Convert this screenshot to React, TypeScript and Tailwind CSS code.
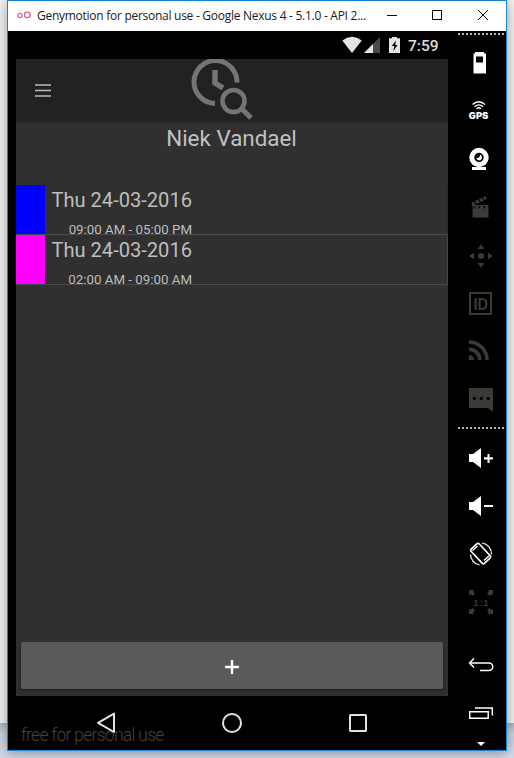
import React from 'react';

const sans = "font-['Open_Sans','Noto_Sans',sans-serif]";

function SideIcon({ y, children }: { y: number; children: React.ReactNode }) {
  return (
    <svg className="block h-12 w-12 shrink-0" viewBox={`457 ${y} 48 48`} fill="currentColor">
      {children}
    </svg>
  );
}

function Dots() {
  return (
    <div className="ml-px h-[2px] w-[46px] shrink-0 bg-[repeating-linear-gradient(90deg,#b9b9b9_0_2px,transparent_2px_4px)]" />
  );
}

function TitleBar() {
  return (
    <header className="flex h-[30px] shrink-0 items-center bg-white">
      <svg className="ml-[9px] h-[30px] w-[14px] shrink-0" viewBox="17 1 14 30" fill="none" stroke="#dc6297" strokeWidth="1.3">
        <circle cx="20" cy="15.5" r="2.1" />
        <circle cx="27.3" cy="14.9" r="2.8" />
      </svg>
      <span className={`${sans} ml-[6px] w-[334px] whitespace-nowrap text-[12px] leading-[30px] tracking-[-0.27px] text-[#202020]`}>
        Genymotion for personal use - Google Nexus 4 - 5.1.0 - API 2...
      </span>
      <svg className="h-[30px] w-[120px] shrink-0" viewBox="371 1 120 30" fill="none" stroke="#000">
        <path d="M387 15.5h10" />
        <rect x="432.5" y="10.5" width="9" height="9" />
        <path d="M478 10l10 10M488 10l-10 10" />
      </svg>
    </header>
  );
}

function StatusBar() {
  return (
    <div className="flex h-7 shrink-0 justify-end">
      <svg className="h-7 w-[60px]" viewBox="342 31 60 28">
        <path d="M342.3 40.5Q352 33.2 361.8 40.5L352 53z" fill="#e4e4e4" />
        <path d="M380 37v16h-16z" fill="#4b4b4b" />
        <path d="M373 44v9h-9z" fill="#e4e4e4" />
        <path d="M389 38.3h3V37h5v1.3h3V53h-11z" fill="#e4e4e4" />
        <path d="M396 40.5l-4.2 5.5h2.4l-.8 5 4.1-6h-2.3z" fill="#000" />
      </svg>
      <span className="mr-[9px] ml-[6px] w-[31px] whitespace-nowrap font-[Roboto,sans-serif] text-[15.5px] leading-[30px] font-medium text-[#dedede]">
        7:59
      </span>
    </div>
  );
}

function AppHeader() {
  return (
    <div className="h-[65px] shrink-0 bg-[linear-gradient(#222_0_61px,#2c2c2c_64px,#303030)]">
      <svg className="h-[65px] w-full" viewBox="16 59 432 65" fill="none">
        <path d="M35 85h16M35 90.5h16M35 96h16" stroke="#bababa" strokeWidth="1.5" />
        <g stroke="#757575">
          <path d="M237 82.5A21.5 21.5 0 1 0 215 103.5" strokeWidth="5" />
          <path d="M215 70v13l8 5" strokeWidth="5.5" />
          <circle cx="233.5" cy="101" r="11" strokeWidth="4.6" />
          <path d="M241.5 108.5l9.5 9.5" strokeWidth="5.2" />
        </g>
      </svg>
    </div>
  );
}

function Shift({ date, hours, colour, edge }: { date: string; hours: string; colour: string; edge: string }) {
  return (
    <li className={`flex h-[50px] border-b border-[#4b4b4b] ${edge}`}>
      <div className={`w-[28.5px] shrink-0 ${colour}`} />
      <div className="ml-[6.5px] flex w-[141px] flex-col items-end whitespace-nowrap text-[#bebebe]">
        <span className="text-[20.1px] leading-[31px]">{date}</span>
        <span className="mt-[6px] text-[13.3px] leading-[16px]">{hours}</span>
      </div>
    </li>
  );
}

function Phone() {
  return (
    <section className="ml-2 flex w-[432px] shrink-0 flex-col font-[Roboto,sans-serif]">
      <StatusBar />
      <main className="flex h-[637px] shrink-0 flex-col bg-[#303030]">
        <AppHeader />
        <h1 className="h-[61px] pr-px text-center text-[22.4px] leading-[28px] font-normal text-[#c1c1c1]">Niek Vandael</h1>
        <ul>
          <Shift date="Thu 24-03-2016" hours="09:00 AM - 05:00 PM" colour="bg-[#0000ff]" edge="border-r border-r-[#26264a]" />
          <Shift date="Thu 24-03-2016" hours="02:00 AM - 09:00 AM" colour="bg-[#ff00ff]" edge="border-r border-r-[#663066]" />
        </ul>
        <button className="mx-[5px] mt-auto mb-[7px] flex h-[47px] items-center justify-center rounded-[2px] bg-[#5a5a5c] shadow-[0_1px_2px_rgba(0,0,0,0.5)]">
          <svg className="h-4 w-4" viewBox="0 0 16 16" fill="none" stroke="#fff" strokeWidth="2.4">
            <path d="M1 9h14M8 2v14" />
          </svg>
        </button>
      </main>
      <nav className="relative h-[54px] shrink-0">
        <span className="absolute top-[27px] left-[5px] text-[17.5px] leading-[24px] font-light tracking-[-0.72px] whitespace-nowrap text-[#444]">
          free for personal use
        </span>
        <svg className="absolute inset-0 h-[54px] w-[432px]" viewBox="16 696 432 54" fill="none" stroke="#e2e2e2" strokeWidth="2">
          <path d="M98 722.8l16-9.2v18.4z" strokeLinejoin="round" />
          <circle cx="232" cy="723" r="9" />
          <rect x="350" y="715" width="16" height="16" rx=".5" />
        </svg>
      </nav>
    </section>
  );
}

function Toolbar() {
  return (
    <aside className="flex w-[58px] shrink-0 flex-col pt-[2px] pl-[9px] text-white">
      <Dots />
      <div className="mt-1">
        <SideIcon y={39}>
          <path fillRule="evenodd" d="M473.5 53.500h1.500v-1.500h9v1.500h2v20h-12.500zM476 56.500v6h7v-6z" />
        </SideIcon>
        <SideIcon y={87}>
          <path d="M472.500 104.500q6.300-5.500 12.500 0M474.500 106.700q4.300-3.700 8.500 0M476.500 108.700q2.300-2 4.500 0" fill="none" stroke="currentColor" strokeWidth="1.300" />
          <text x="468.800" y="118.700" textLength="19.500" lengthAdjust="spacingAndGlyphs" className="font-[Inter,sans-serif] text-[9px] font-black">GPS</text>
        </SideIcon>
        <SideIcon y={135}>
          <path d="M472 170v-3h5.500v-2h3v2h5.500v3z" />
          <circle cx="479" cy="157.500" r="9.700" />
          <circle cx="479" cy="157.500" r="4.700" fill="#000" />
          <path d="M480 154.500a3 3 0 1 1-3.800 3.800q4.200 0 3.800-3.800z" />
        </SideIcon>
      </div>
      <div className="text-[#3b3b36]">
        <SideIcon y={183}>
          <path d="M472.500 205h16v12.500h-16z" />
          <path d="M472 204.500l14-7" stroke="currentColor" strokeWidth="3.500" />
          <path d="M474 201l2.500 3.500M478 199l2.500 3.500M482 197l2.500 3.500M475 206l-1.500 2.500M480 206l-1.500 2.500M485 206l-1.500 2.500" stroke="#000" strokeWidth="1.200" />
        </SideIcon>
        <SideIcon y={231}>
          <circle cx="481" cy="256" r="3" />
          <path d="M481 244l3.200 5h-6.400zM481 268l3.200-5h-6.400zM469 256l5-3.200v6.400zM493 256l-5-3.200v6.400z" />
        </SideIcon>
        <SideIcon y={279}>
          <rect x="470" y="293" width="21" height="21" fill="none" stroke="currentColor" strokeWidth="2" />
          <text x="473.500" y="309.500" textLength="14.500" lengthAdjust="spacingAndGlyphs" className="font-['Liberation_Sans',sans-serif] text-[16px] font-bold">ID</text>
        </SideIcon>
        <SideIcon y={327}>
          <path d="M469 355a5 5 0 0 1 5 5h-5z" />
          <path d="M469 349.200a10.800 10.800 0 0 1 10.800 10.800M469 342a18 18 0 0 1 18 18" fill="none" stroke="currentColor" strokeWidth="3.600" />
        </SideIcon>
        <SideIcon y={375}>
          <path d="M469 388h24v24l-5-4h-19z" />
          <g fill="#000">
            <circle cx="474.500" cy="398.500" r="1.700" />
            <circle cx="481.300" cy="398.500" r="1.700" />
            <circle cx="488.100" cy="398.500" r="1.700" />
          </g>
        </SideIcon>
      </div>
      <div className="mt-1">
        <Dots />
      </div>
      <div className="mt-[5px]">
        <SideIcon y={434}>
          <path d="M469 454h4l8-6v20l-8-6h-4zM484 457.300h3.500V454h2v3.300h3.500v2.200h-3.500v3.500h-2v-3.500H484z" />
        </SideIcon>
        <SideIcon y={482}>
          <path d="M469 502h4l8-6v20l-8-6h-4zM484 505h9v2h-9z" />
        </SideIcon>
        <SideIcon y={530}>
          <g fill="none" stroke="currentColor" strokeWidth="1.600">
            <rect x="475.200" y="543.800" width="11" height="19.500" rx="1.800" transform="rotate(-43 480.700 553.550)" />
            <path d="M484 560.500l6-5.500M472.500 550.500l5-4.500" strokeWidth="1.500" />
            <path d="M482 543a11 11 0 0 1 9.500 11.500M479.500 565a11 11 0 0 1-9-10.500" strokeWidth="1.200" />
          </g>
        </SideIcon>
        <div className="text-[#3b3b36]">
          <SideIcon y={578}>
            <path d="M469 590h5.500l-1.500 1.500 2 2-2.500 2.500-2-2-1.500 1.500zM493 590h-5.500l1.500 1.500-2 2 2.500 2.500 2-2 1.500 1.500zM469 614h5.500l-1.500-1.500 2-2-2.500-2.500-2 2-1.500-1.500zM493 614h-5.500l1.500-1.500-2-2 2.500-2.500 2 2 1.500-1.500z" />
            <text x="473.500" y="605.500" textLength="15" className="font-['Liberation_Sans',sans-serif] text-[9px] font-bold">1:1</text>
          </SideIcon>
        </div>
      </div>
      <div className="mt-[15px]">
        <SideIcon y={641}>
          <path d="M474 658.500l-4.500 4.500 4.500 4.500M470 663h19a3.500 3.500 0 0 1 0 7.500h-9" fill="none" stroke="currentColor" strokeWidth="1.500" />
        </SideIcon>
        <SideIcon y={689}>
          <path d="M469.750 711.750h18.500v6.500h-18.500zM475 708h17.300v7.500" fill="none" stroke="currentColor" strokeWidth="1.500" />
        </SideIcon>
        <svg className="block h-[13px] w-12" viewBox="457 737 48 13" fill="#fff">
          <path d="M477 742h8l-4 4z" />
        </svg>
      </div>
    </aside>
  );
}

export default function App() {
  return (
    <div className="h-[758px] w-[514px] overflow-hidden bg-[linear-gradient(#f1f1f1_0_723px,#a9b2c2_723px,#cbd3e1_734px,#d3dbe9_758px)] pl-[7px]">
      <div className="flex h-[751px] w-[500px] flex-col border border-[#1883d7] bg-black shadow-[0_2px_12px_rgba(0,0,0,0.35)]">
        <TitleBar />
        <div className="flex h-[719px]">
          <Phone />
          <Toolbar />
        </div>
      </div>
    </div>
  );
}
